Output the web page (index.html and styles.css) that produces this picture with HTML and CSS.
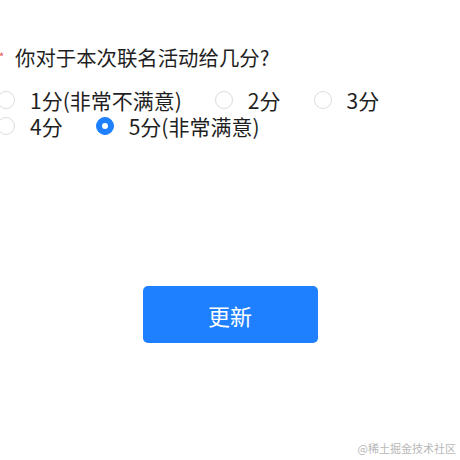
FILE: index.html
```html
<!DOCTYPE html>
<html lang="zh">
<head>
<meta charset="utf-8">
<link rel="stylesheet" href="styles.css">
</head>
<body>
<div class="page">
  <div class="form">
    <div class="question"><span class="star">*</span><span class="qtext">你对于本次联名活动给几分?</span></div>
    <div class="options">
      <label class="opt"><span class="radio"></span><span class="label">1分(非常不满意)</span></label>
      <label class="opt"><span class="radio"></span><span class="label">2分</span></label>
      <label class="opt"><span class="radio"></span><span class="label">3分</span></label>
      <label class="opt"><span class="radio"></span><span class="label">4分</span></label>
      <label class="opt"><span class="radio checked"></span><span class="label">5分(非常满意)</span></label>
    </div>
  </div>
  <div class="actions"><button class="btn">更新</button></div>
  <div class="watermark">@稀土掘金技术社区</div>
</div>
</body>
</html>
```
FILE: styles.css
```css
html, body {
  margin: 0;
  padding: 0;
  background: #fff;
}
body {
  font-family: "Noto Sans CJK SC", "Noto Sans", sans-serif;
  color: #1f1f1f;
  width: 460px;
  height: 460px;
  overflow: hidden;
}
.page {
  position: relative;
  width: 460px;
  height: 460px;
}
.form {
  margin-left: -3px;
  padding-top: 43px;
}
.question {
  display: flex;
  align-items: center;
  height: 28px;
  font-size: 20.4px;
  line-height: 28px;
}
.star {
  color: #e5484d;
  font-size: 11px;
  width: 16px;
  margin-left: 2px;
  line-height: 12px;
  padding-bottom: 2px;
}
.options {
  display: flex;
  flex-wrap: wrap;
  margin-top: 16px;
}
.opt {
  display: inline-flex;
  align-items: center;
  height: 26px;
  margin-right: 33px;
  font-size: 21px;
  line-height: 26px;
}
.radio {
  width: 18px;
  height: 18px;
  box-sizing: border-box;
  border: 1.5px solid #dcdcdc;
  border-radius: 50%;
  margin-right: 15px;
  display: flex;
  align-items: center;
  justify-content: center;
}
.radio.checked {
  background: #1e80ff;
  border-color: #1e80ff;
}
.radio.checked::after {
  content: "";
  width: 6px;
  height: 6px;
  border-radius: 50%;
  background: #fff;
}
.actions {
  display: flex;
  justify-content: center;
  margin-top: 147px;
}
.btn {
  width: 175px;
  height: 57px;
  border: none;
  border-radius: 5px;
  background: #1e80ff;
  color: #fff;
  font-family: "Noto Sans CJK SC", "Noto Sans", sans-serif;
  font-size: 22px;
  padding: 0;
}
.watermark {
  position: absolute;
  right: 4px;
  top: 440px;
  font-size: 11px;
  color: #b8b8b8;
  font-family: "Noto Sans CJK SC", serif;
}
```
